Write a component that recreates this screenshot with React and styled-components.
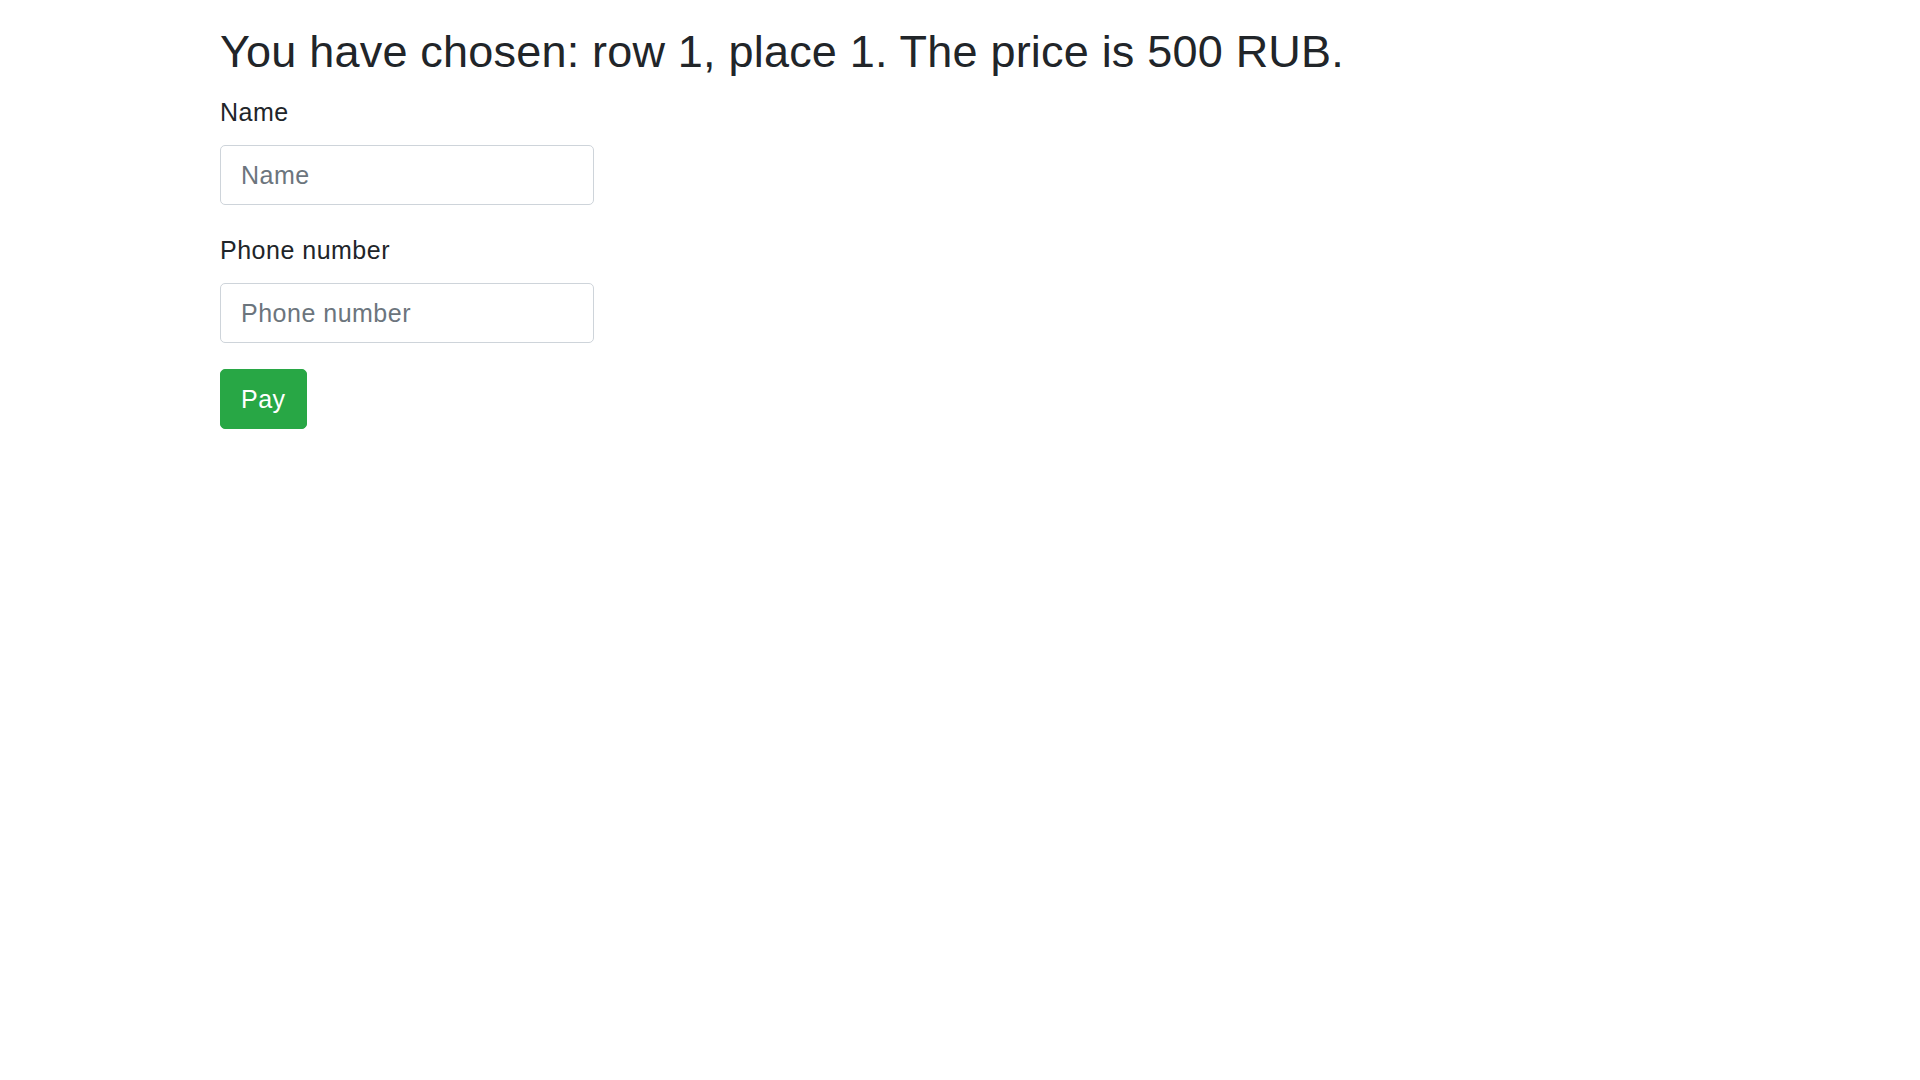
import React from 'react';
import styled, { createGlobalStyle } from 'styled-components';

const GlobalStyle = createGlobalStyle`
    html, body {
        margin: 0;
        padding: 0;
        background: #fff;
    }
    body {
        font-family: "Liberation Sans", Arial, sans-serif;
        color: #212529;
    }
`;

const Page = styled.div`
    padding: 25px 220px 0;
`;

const Title = styled.h1`
    margin: 0;
    font-size: 45px;
    font-weight: 400;
    line-height: 54px;
    letter-spacing: 0.2px;
`;

const Form = styled.form`
    display: flex;
    flex-direction: column;
    align-items: flex-start;
`;

const Group = styled.div`
    display: flex;
    flex-direction: column;
    margin-top: ${props => props.first ? '14.5px' : '26.5px'};
`;

const Label = styled.label`
    font-size: 25px;
    line-height: 37.5px;
    letter-spacing: 0.5px;
    margin-bottom: 14px;
`;

const Input = styled.input`
    box-sizing: border-box;
    width: 374px;
    height: 60px;
    padding: 0 20px;
    font-family: inherit;
    font-size: 25px;
    letter-spacing: 0.5px;
    color: #495057;
    border: 1px solid #ced4da;
    border-radius: 5px;
    outline: none;
    &::placeholder {
        color: #6c757d;
    }
`;

const PayBtn = styled.button`
    margin-top: 26px;
    height: 60px;
    padding: 0 20px;
    font-family: inherit;
    font-size: 25px;
    letter-spacing: 0.5px;
    color: #fff;
    background-color: #28a745;
    border: 1px solid #28a745;
    border-radius: 5px;
    cursor: pointer;
`;

function App() {
    return (
        <Page>
            <GlobalStyle />
            <Title>You have chosen: row 1, place 1. The price is 500 RUB.</Title>
            <Form onSubmit={e => e.preventDefault()}>
                <Group first>
                    <Label htmlFor="name">Name</Label>
                    <Input id="name" placeholder="Name" />
                </Group>
                <Group>
                    <Label htmlFor="phone">Phone number</Label>
                    <Input id="phone" placeholder="Phone number" />
                </Group>
                <PayBtn type="submit">Pay</PayBtn>
            </Form>
        </Page>
    );
}

export default App;
